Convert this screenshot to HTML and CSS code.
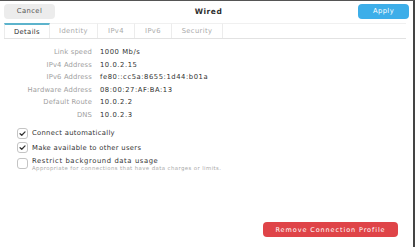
FILE: index.html
```html
<!DOCTYPE html>
<html lang="en">
  <head>
    <meta charset="UTF-8" />
    <title>Wired</title>
    <link rel="stylesheet" href="styles.css">
  </head>
  <body>
    <div class="window">
      <header class="topbar">
        <button class="btn cancel">Cancel</button>
        <h1>Wired</h1>
        <button class="btn apply">Apply</button>
      </header>

      <nav class="tabs">
        <span class="tab active">Details</span>
        <span class="tab">Identity</span>
        <span class="tab">IPv4</span>
        <span class="tab">IPv6</span>
        <span class="tab">Security</span>
        <span class="tab-rest"></span>
      </nav>

      <main class="content">
        <dl class="info">
          <dt>Link speed</dt><dd>1000 Mb/s</dd>
          <dt>IPv4 Address</dt><dd>10.0.2.15</dd>
          <dt>IPv6 Address</dt><dd>fe80::cc5a:8655:1d44:b01a</dd>
          <dt>Hardware Address</dt><dd>08:00:27:AF:BA:13</dd>
          <dt>Default Route</dt><dd>10.0.2.2</dd>
          <dt>DNS</dt><dd>10.0.2.3</dd>
        </dl>

        <div class="checks">
          <label class="check">
            <span class="box on"><svg viewBox="0 0 10 10"><path d="M2.3 5.2 L4.2 7 L7.8 3.2" /></svg></span>
            <span>Connect automatically</span>
          </label>
          <label class="check">
            <span class="box on"><svg viewBox="0 0 10 10"><path d="M2.3 5.2 L4.2 7 L7.8 3.2" /></svg></span>
            <span>Make available to other users</span>
          </label>
          <label class="check">
            <span class="box"></span>
            <span class="long">Restrict background data usage
              <small>Appropriate for connections that have data charges or limits.</small>
            </span>
          </label>
        </div>

        <div class="footer">
          <button class="btn remove">Remove Connection Profile</button>
        </div>
      </main>
    </div>
  </body>
</html>
```

FILE: styles.css
```css
body {
  margin: 0;
  background: #fff;
  font-family: "DejaVu Sans", sans-serif;
}

.window {
  width: 413px;
  height: 246px;
  border-top: 1px solid #555;
  border-right: 2px solid #444;
  display: flex;
  flex-direction: column;
  background: #fff;
}

/* header bar */
.topbar {
  display: flex;
  align-items: center;
  justify-content: space-between;
  padding: 2px 4px 0 4px;
  height: 16px;
}
.topbar h1 {
  margin: 0;
  font-size: 7.5px;
  letter-spacing: 0.5px;
  font-weight: bold;
  color: #2e2e2e;
  padding-left: 4px;
}
.btn {
  border: none;
  font-family: "DejaVu Sans", sans-serif;
  font-size: 6.8px;
  letter-spacing: 0.4px;
  border-radius: 4px;
  height: 15px;
  padding: 0;
}
.cancel {
  width: 51px;
  background: #ececec;
  color: #555;
}
.apply {
  width: 51px;
  background: #3daee9;
  color: #fff;
}

/* tabs */
.tabs {
  display: flex;
  margin: 4px 7px 0 4px;
  height: 15px;
  border-bottom: 1px solid #e2e2e2;
}
.tab {
  display: flex;
  align-items: center;
  justify-content: center;
  font-size: 6.8px;
  letter-spacing: 0.35px;
  color: #aaa;
  border-right: 1px solid #ececec;
  border-top: 1px solid #f0f0f0;
  background: #fff;
}
.tab:nth-child(1) { width: 44px; }
.tab:nth-child(2) { width: 47px; }
.tab:nth-child(3) { width: 36px; }
.tab:nth-child(4) { width: 36px; }
.tab:nth-child(5) { width: 50px; }
.tab.active {
  color: #333;
  border-top: 2px solid #5cb3cc;
  border-left: 1px solid #ececec;
}
.tab-rest {
  flex: 1;
  border-top: 1px solid #f0f0f0;
}

/* details */
.content {
  flex: 1;
  display: flex;
  flex-direction: column;
}
.info {
  display: grid;
  grid-template-columns: 92px 1fr;
  column-gap: 8px;
  row-gap: 5.6px;
  margin: 10px 0 0 0;
  font-size: 6.8px;
  line-height: 7px;
}
.info dt {
  text-align: right;
  color: #a0a0a0;
  letter-spacing: 0.15px;
}
.info dd {
  margin: 0;
  color: #333;
  letter-spacing: 0.55px;
}

.checks {
  display: flex;
  flex-direction: column;
  gap: 3.5px;
  margin: 9px 0 0 17px;
}
.check {
  display: flex;
  align-items: center;
  gap: 4px;
  font-size: 6.8px;
  letter-spacing: 0.3px;
  color: #333;
  line-height: 8px;
}
.check .long {
  letter-spacing: 0.6px;
}
.check small {
  display: block;
  font-size: 5.4px;
  letter-spacing: 0.4px;
  line-height: 6px;
  color: #aaa;
}
.box {
  width: 9px;
  height: 9px;
  border: 1px solid #c4c4c4;
  border-radius: 3px;
  background: #fff;
  display: flex;
  flex: none;
}
.box svg {
  width: 9px;
  height: 9px;
}
.box path {
  fill: none;
  stroke: #333;
  stroke-width: 1.4;
  stroke-linecap: round;
  stroke-linejoin: round;
}

.footer {
  flex: 1;
  display: flex;
  justify-content: flex-end;
  align-items: flex-end;
  padding: 0 15px 10px 0;
}
.remove {
  width: 135px;
  height: 15px;
  background: #df4448;
  color: #fff;
  font-size: 6.5px;
  letter-spacing: 0.9px;
}
```
